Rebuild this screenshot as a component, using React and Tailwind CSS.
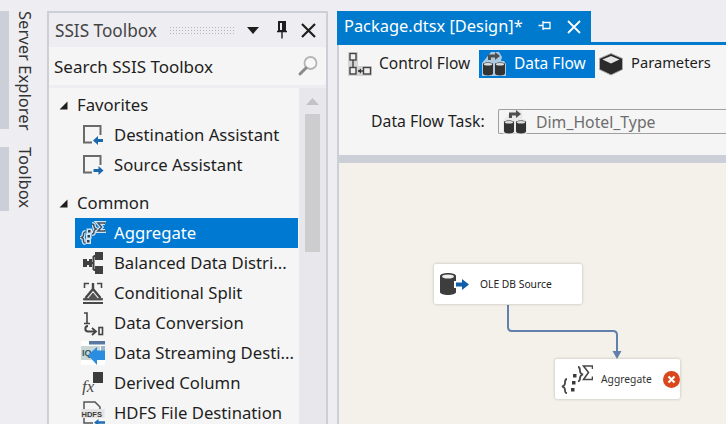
const FONT = "font-['Noto_Sans','Open_Sans',sans-serif]";

const Tri = () => (
  <svg width="9" height="9" viewBox="0 0 9 9" className="shrink-0"><path d="M8.5 0.5V8.5H0.5Z" fill="#1e1e1e" /></svg>
);

const DestIcon = () => (
  <svg width="22" height="22" viewBox="0 0 22 22" fill="none">
    <path d="M18.500 11V2H2V18.500H10" stroke="#6a6a6a" strokeWidth="2" fill="#f5f5f5" />
    <path d="M11 16.500l5-4.500v3h5v3h-5v3z" fill="#1a68ad" />
  </svg>
);
const SrcIcon = () => (
  <svg width="22" height="22" viewBox="0 0 22 22" fill="none">
    <path d="M18.500 11V2H2V18.500H10" stroke="#6a6a6a" strokeWidth="2" fill="#f5f5f5" />
    <path d="M21.500 16.500l-5-4.500v3h-5v3h5v3z" fill="#1a68ad" />
  </svg>
);
const AggIcon = () => {
  const strokes = "M5.500 11c-2 0-2 1-2 3s-1 2-2 2.500c1 .5 2 .5 2 2.500s0 3 2 3M12 3c2 0 2 1 2 2.500s1 2 2 2.500c-1 .5-2 1-2 2.500s0 2.500-2 2.500M25 3V2h-7l3.500 4-3.500 4h7V9";
  const dots = "M8 9h2.500v2.500H8zM7.500 14h2.500v2.500H7.500zM7 19h2.500v2.500H7z";
  return (
    <svg width="26" height="24" viewBox="0 0 26 24" fill="none">
      <path d={strokes} stroke="#ffffff" strokeWidth="4" opacity="0.8" />
      <path d={dots} stroke="#ffffff" strokeWidth="3" opacity="0.8" />
      <path d={strokes} stroke="#44505e" strokeWidth="1.500" />
      <path d={dots} fill="#33404e" />
    </svg>
  );
};
const BalIcon = () => (
  <svg width="22" height="24" viewBox="0 0 22 24" fill="#404040">
    <path d="M1 8h4v2h2V8h3v8H7v-2H5v2H1zM13 1h8v8h-8zM13 15h8v8h-8z" />
    <path d="M9 12h2.500M11.500 5v14M11.500 5H14M11.500 19H14" fill="none" stroke="#404040" strokeWidth="2" />
  </svg>
);
const CondIcon = () => (
  <svg width="22" height="24" viewBox="0 0 22 24" fill="none" stroke="#484848">
    <path d="M2.500 7V2.500H7M19.500 7V2.500H15" strokeWidth="1.600" />
    <path d="M11 2v6L3.500 17M11 8l7.500 9" strokeWidth="2.400" />
    <path d="M1.500 17.500h5l4.500-5.500 4.500 5.500h5V19h-19z" fill="#555" strokeWidth="0.800" />
    <path d="M1 22h20" strokeWidth="2" />
  </svg>
);
const ConvIcon = () => (
  <svg width="22" height="26" viewBox="0 0 22 26" fill="none" stroke="#444">
    <path d="M2 3h3v11M2 13.500h6" strokeWidth="1.600" />
    <path d="M6 16c-3.500 0-3.500 5.500 0 5.500h7" strokeWidth="2" />
    <path d="M10 18l4 3.500-4 3.500" strokeWidth="1.800" />
    <rect x="17" y="17.500" width="3.500" height="7" strokeWidth="1.600" />
  </svg>
);
const StreamIcon = () => (
  <svg width="24" height="24" viewBox="0 0 24 24">
    <rect width="24" height="24" fill="#fff" />
    <rect x="8" y="0" width="16" height="3.500" fill="#5878a0" />
    <rect x="0" y="5" width="19" height="14" fill="#c9d8d4" />
    <text x="1" y="15" fontSize="9" fontWeight="700" fill="#34566a" fontFamily="Liberation Sans">IQ</text>
    <rect x="20" y="5" width="4" height="5" fill="#9fb6cf" />
    <path d="M24 9.500H16V6L7 14l9 10v-5h8z" fill="#2b8de0" />
  </svg>
);
const FxIcon = () => (
  <svg width="22" height="24" viewBox="0 0 22 24">
    <rect x="11" y="1" width="10" height="11" fill="#3c3c3c" />
    <text x="0" y="21" fontSize="17" fontStyle="italic" fontFamily="Liberation Serif" fill="#4a4a4a">fx</text>
  </svg>
);
const HdfsIcon = () => (
  <svg width="24" height="26" viewBox="0 0 24 26" fill="none">
    <path d="M3 9V2h11l5 5v2M3 18v5h9" stroke="#555" strokeWidth="1.500" />
    <rect x="0" y="9" width="23.500" height="9" fill="#e4e4e4" />
    <text x="0.500" y="16.500" fontSize="7.500" fontWeight="700" fill="#3c3c3c" fontFamily="Liberation Sans">HDFS</text>
    <path d="M13 22.500l4.500-3.500v2.300H24v2.500h-6.500V26z" fill="#1f6fb5" />
  </svg>
);
const CtlIcon = () => (
  <svg width="24" height="24" viewBox="0 0 24 24">
    <rect x="0" y="0" width="10" height="24" fill="#d4d4d4" />
    <rect x="10" y="14" width="14" height="10" fill="#d4d4d4" />
    <g fill="#efefef" stroke="#444" strokeWidth="1.400">
      <rect x="2" y="1.500" width="6" height="6.500" />
      <rect x="2" y="15.500" width="6" height="6.500" />
      <rect x="15.500" y="15.500" width="7" height="6.500" />
    </g>
    <path d="M5 8v7.500M10 19h5" fill="none" stroke="#444" strokeWidth="1.400" />
    <path d="M10 19l3-2.500v5z" fill="#333" />
  </svg>
);
const FlowIcon = () => (
  <svg width="24" height="24" viewBox="0 0 24 24">
    <path d="M0 11 5 5l4-5h8l3 5-1 4h3l2 3v12H0z" fill="#e4e4e4" opacity="0.75" />
    <path d="M6 8V2.500h7V0l5 4-5 4V5.500H9V8z" fill="#4e4e4e" />
    <path d="M1 12c0-2 10-2 10 0v9.500c0 2.500-10 2.500-10 0z" fill="#333" />
    <path d="M13 12c0-2 10-2 10 0v9.500c0 2.500-10 2.500-10 0z" fill="#333" />
    <ellipse cx="6" cy="12.200" rx="4.200" ry="1.300" fill="#dedede" />
    <ellipse cx="18" cy="12.200" rx="4.200" ry="1.300" fill="#dedede" />
  </svg>
);
const ParamIcon = () => (
  <svg width="24" height="24" viewBox="0 0 24 24">
    <path d="M12 1.500 23.500 6.500V17.500L12 23 .5 17.500V6.500z" fill="#2b2b2b" stroke="#aaa" strokeWidth="1" />
    <path d="M12 4 20.500 7.500 12 11.500 3.500 7.500z" fill="#e6e6e6" />
  </svg>
);

const Row = ({ icon, label, selected }) => (
  <div className={`flex h-[30px] items-center ml-[26px] w-[223px] text-[16.7px] ${selected ? "bg-[#0079d2] text-white" : "text-[#1e1e1e]"}`}>
    <span className="flex w-[39px] shrink-0 justify-center pr-[3px]">{icon}</span>
    <span className="whitespace-nowrap pt-[1px]">{label}</span>
  </div>
);
const Head = ({ label }) => (
  <div className="flex h-[30px] items-center pl-[10px] gap-[9px] text-[#1e1e1e] text-[16.7px]">
    <Tri />
    <span className="pt-[1px]">{label}</span>
  </div>
);

const Node = ({ className, children }) => (
  <div className={`absolute flex h-[40px] items-center bg-white rounded-[2px] shadow-[0_0_3px_rgba(0,0,0,0.25)] ${className}`}>{children}</div>
);

export default function App() {
  return (
    <div className={`flex h-[424px] w-[726px] overflow-hidden bg-[#eeeef2] ${FONT} text-[15.5px] leading-none`}>
      {/* Left rail */}
      <div className="flex w-[47px] shrink-0 flex-col pt-[11px] gap-[18px]">
        <div className="flex h-[118px]">
          <div className="w-[9px] bg-[#ccced8]" />
          <div className="ml-[7px] [writing-mode:vertical-rl] text-[#333] text-[16.6px] whitespace-nowrap">Server Explorer</div>
        </div>
        <div className="flex h-[64px]">
          <div className="w-[9px] bg-[#ccced8]" />
          <div className="ml-[7px] [writing-mode:vertical-rl] text-[#333] text-[16.6px] whitespace-nowrap">Toolbox</div>
        </div>
      </div>

      {/* Toolbox panel */}
      <div className="flex h-[413px] mt-[11px] w-[281px] shrink-0 flex-col border-2 border-b-0 border-[#ccced8] bg-[#f5f5f5]">
        <div className="flex h-[34px] shrink-0 items-center bg-[#eeeef2] pl-[6px] pr-[10px]">
          <span className="text-[#444] text-[17.2px] whitespace-nowrap pt-[1px]">SSIS Toolbox</span>
          <div className="ml-[12px] h-[8px] w-[65px] bg-[radial-gradient(#b5b5b5_0.8px,transparent_1px)] bg-[length:3px_3px]" />
          <svg width="12" height="7" viewBox="0 0 12 7" className="ml-[13px]"><path d="M0 0h12L6 7z" fill="#1e1e1e" /></svg>
          <svg width="12" height="18" viewBox="0 0 12 18" className="ml-[17px]" fill="none" stroke="#1e1e1e"><path d="M3 1h6v9H3z" strokeWidth="2" /><path d="M1 10.500h10M6 11v6.500" strokeWidth="1.400" /><path d="M7 2v8" strokeWidth="2" /></svg>
          <svg width="15" height="15" viewBox="0 0 15 15" className="ml-[13px]" stroke="#1e1e1e" strokeWidth="2.200"><path d="M1 1l13 13M14 1 1 14" /></svg>
        </div>
        <div className="flex h-[38px] shrink-0 items-center bg-[#f5f5f5] pl-[5px] pr-[7px] justify-between">
          <span className="text-[#1e1e1e] text-[17px] whitespace-nowrap pt-[1px]">Search SSIS Toolbox</span>
          <svg width="22" height="24" viewBox="0 0 22 22" fill="none"><circle cx="13.500" cy="8" r="6" stroke="#b5b5b5" strokeWidth="1.800" fill="#f8f8f8" /><path d="M9 13l-6 6" stroke="#8a8a8a" strokeWidth="3" strokeLinecap="round" /></svg>
        </div>
        <div className="h-[3px] shrink-0 bg-[#eeeef2]" />
        <div className="flex min-h-0 flex-1">
          <div className="flex-1 overflow-hidden pt-[2px]">
            <Head label="Favorites" />
            <Row icon={<DestIcon />} label="Destination Assistant" />
            <Row icon={<SrcIcon />} label="Source Assistant" />
            <div className="h-[8px]" />
            <Head label="Common" />
            <Row selected icon={<AggIcon />} label="Aggregate" />
            <Row icon={<BalIcon />} label="Balanced Data Distri..." />
            <Row icon={<CondIcon />} label="Conditional Split" />
            <Row icon={<ConvIcon />} label="Data Conversion" />
            <Row icon={<StreamIcon />} label="Data Streaming Desti..." />
            <Row icon={<FxIcon />} label="Derived Column" />
            <Row icon={<HdfsIcon />} label="HDFS File Destination" />
          </div>
          <div className="flex w-[27px] shrink-0 flex-col items-center bg-[#e8e8ec] pt-[10px]">
            <svg width="13" height="7" viewBox="0 0 13 7" className="shrink-0"><path d="M6.500 0 13 7H0z" fill="#c2c3c9" /></svg>
            <div className="mt-[9px] h-[138px] w-[15px] bg-[#cdcdcf]" />
          </div>
        </div>
      </div>

      {/* Designer */}
      <div className="ml-[9px] flex min-w-0 flex-1 flex-col pt-[11px]">
        <div className="flex h-[31px] w-[254px] shrink-0 items-center bg-[#007acc] pl-[7px] text-white">
          <span className="text-[16.4px] whitespace-nowrap">Package.dtsx [Design]*</span>
          <svg width="13" height="13" viewBox="0 0 13 13" className="ml-[15px]" fill="none" stroke="#fff" strokeWidth="1.300"><path d="M5 2.500h7v6H5zM5 1v9M0.500 5.500H5" /></svg>
          <svg width="14" height="14" viewBox="0 0 14 14" className="ml-[16px]" stroke="#fff" strokeWidth="1.800"><path d="M1 1l12 12M13 1 1 13" /></svg>
        </div>
        <div className="h-[3px] shrink-0 bg-[#007acc]" />
        <div className="flex min-h-0 flex-1 flex-col border-l-2 border-[#ccced8]">
          <div className="h-[110px] shrink-0 bg-[#f5f5f5]">
            <div className="flex h-[33px] items-start pt-[5px]">
              <div className="flex h-[28px] items-center pl-[9px] gap-[7px] w-[140px] text-[#1e1e1e]">
                <CtlIcon />
                <span className="whitespace-nowrap">Control Flow</span>
              </div>
              <div className="flex h-[28px] w-[116px] items-center bg-[#0079d2] pl-[3px] gap-[8px] text-white">
                <FlowIcon />
                <span className="whitespace-nowrap">Data Flow</span>
              </div>
              <div className="flex h-[28px] items-center pl-[4px] gap-[8px] text-[#1e1e1e] text-[14.7px]">
                <ParamIcon />
                <span className="whitespace-nowrap pb-[3px]">Parameters</span>
              </div>
            </div>
            <div className="flex items-center mt-[31px] pl-[32px]">
              <span className="w-[127px] whitespace-nowrap text-[#1e1e1e] text-[15.8px] pt-[1px]">Data Flow Task:</span>
              <div className="flex h-[25px] flex-1 items-center rounded-l-[2px] border border-r-0 border-[#a0a0a0] bg-[#f5f5f5] pl-[4px] gap-[9px] text-[#6d6d6d] text-[15.8px]">
                <FlowIcon />
                <span className="whitespace-nowrap pt-[2px]">Dim_Hotel_Type</span>
              </div>
            </div>
          </div>
          <div className="h-[8px] shrink-0 bg-[#ccced8]" />
          <div className="relative flex-1 bg-[#f4f1ea]">
            <svg className="absolute left-[160px] top-[140px]" width="130" height="60" viewBox="0 0 130 60" fill="none">
              <path d="M9 2V24q0 4 4 4H114q4 0 4 4V50" stroke="#6180ab" strokeWidth="2" />
              <path d="M113.500 48h9l-4.500 8z" fill="#6180ab" />
            </svg>
            <Node className="left-[95px] top-[101px] w-[148px]">
              <svg width="30" height="24" viewBox="0 0 30 24" className="ml-[6px]">
                <path d="M0 4c0-4 16-4 16 0v16c0 4-16 4-16 0z" fill="#3d3d3d" />
                <ellipse cx="8" cy="4.500" rx="6" ry="2" fill="#ededed" />
                <path d="M14 9h6V4l10 8.500L20 21v-5h-6z" fill="#fff" />
                <path d="M16 10.500h6V7l7 5.500-7 5.500v-3.500h-6z" fill="#0f5fa8" />
              </svg>
              <span className="ml-[10px] text-[10.300px] text-[#222] whitespace-nowrap">OLE DB Source</span>
            </Node>
            <Node className="left-[216px] top-[196px] w-[125px]">
              <span className="ml-[5px] flex"><svg width="33" height="30" viewBox="0 0 33 30" fill="none">
                <path d="M7 15c-2 0-2 2-2 4s-1 3-3 3.500c2 .5 3 1.500 3 3.500s0 3 2 3" stroke="#484848" strokeWidth="1.800" />
                <path d="M13 10h3.500v3.500H13zM12 17h3.500v3.500H12zM11 24h3.500v3.500H11z" fill="#3a3a3a" />
                <path d="M18 3c2 0 2 2 2 4s1 3 3 3.500c-2 .5-3 1.500-3 3.500s0 3-2 3.500" stroke="#484848" strokeWidth="1.800" />
                <path d="M32.500 5V2h-9l5 6.500-5 7h9v-3" stroke="#484848" strokeWidth="1.600" />
              </svg></span>
              <span className="ml-[8px] text-[10.300px] text-[#333] whitespace-nowrap">Aggregate</span>
              <svg width="17" height="17" viewBox="0 0 17 17" className="ml-[11px]" stroke="#fff" strokeWidth="2.200"><circle cx="8.500" cy="8.500" r="8.500" fill="#d9481c" stroke="none" /><path d="M5.500 5.500l6 6M11.500 5.500l-6 6" /></svg>
            </Node>
          </div>
        </div>
      </div>
    </div>
  );
}
